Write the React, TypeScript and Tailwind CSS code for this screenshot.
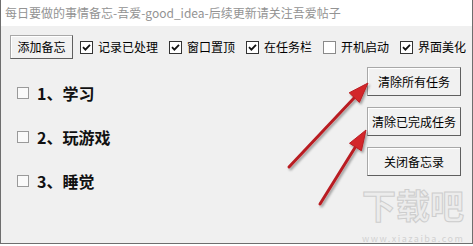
import React from "react";

const font = { fontFamily: '"Noto Sans CJK SC", "Noto Sans", sans-serif' };

const options = [
  { label: "记录已处理", checked: true },
  { label: "窗口置顶", checked: true },
  { label: "在任务栏", checked: true },
  { label: "开机启动", checked: false },
  { label: "界面美化", checked: true },
];

const tasks = ["1、学习", "2、玩游戏", "3、睡觉"];

const actions = ["清除所有任务", "清除已完成任务", "关闭备忘录"];

function Box({ checked, small }: { checked: boolean; small?: boolean }) {
  return (
    <span
      className={
        small
          ? "flex h-[12px] w-[12px] items-center justify-center border border-[#9a9a9a] bg-[#fafafa]"
          : checked
          ? "flex h-[13px] w-[13px] items-center justify-center border border-[#333333] bg-white"
          : "flex h-[13px] w-[13px] items-center justify-center border border-[#8a8a8a] bg-white"
      }
    >
      {checked && (
        <svg width="9" height="9" viewBox="0 0 9 9">
          <path d="M1 4.2 L3.4 6.6 L8 1.8" fill="none" stroke="#111" strokeWidth="1.8" />
        </svg>
      )}
    </span>
  );
}

function WinButton({ children, className }: { children: React.ReactNode; className: string }) {
  return (
    <button
      className={
        "flex items-center justify-center border border-[#a8a8a8] border-b-[#5f5f5f] border-r-[#5f5f5f] bg-[#f1f1f1] text-[12px] text-black shadow-[inset_1px_1px_0_#ffffff] " +
        className
      }
    >
      {children}
    </button>
  );
}

export default function App() {
  return (
    <div className="h-[246px] w-[473px] bg-white" style={font}>
      <div className="relative flex h-[244px] w-[473px] flex-col overflow-hidden border-b border-l border-r border-[#6e6e6e] bg-[#f0f0f0]">
        {/* title bar */}
        <div className="flex h-[26px] shrink-0 items-center bg-white pl-[4px] text-[12px] text-[#939393]">
          每日要做的事情备忘-吾爱-good_idea-后续更新请关注吾爱帖子
        </div>

        {/* toolbar */}
        <div className="mt-[9px] flex items-center pl-[9px]">
          <WinButton className="h-[24px] w-[63px]">添加备忘</WinButton>
          <div className="ml-[7px] flex items-center gap-[11px]">
            {options.map((o) => (
              <label key={o.label} className="flex items-center gap-[5px] text-[12px] text-black">
                <Box checked={o.checked} />
                {o.label}
              </label>
            ))}
          </div>
        </div>

        {/* content */}
        <div className="flex flex-1 justify-between">
          <div className="flex flex-col gap-[23px] pl-[16px] pt-[23px]">
            {tasks.map((t) => (
              <div key={t} className="flex h-[21px] items-center gap-[8px]">
                <Box checked={false} small />
                <span className="text-[16px] font-bold text-[#111]">{t}</span>
              </div>
            ))}
          </div>
          <div className="flex flex-col gap-[11px] pr-[11px] pt-[8px]">
            {actions.map((a) => (
              <WinButton key={a} className="h-[29px] w-[94px]">
                {a}
              </WinButton>
            ))}
          </div>
        </div>

        {/* watermark */}
        <span className="pointer-events-none absolute left-[361px] top-[187px] h-[36px] text-[34px] font-bold leading-[36px] tracking-[0px] text-[#ececec] [-webkit-text-stroke:1px_#cdcdcd]">
          下载吧
        </span>
        <span className="pointer-events-none absolute left-[361px] top-[234px] h-[9px] text-[9px] leading-[9px] tracking-[1.5px] text-[#d2d2d2]">
          www.xiazaiba.com
        </span>

        {/* arrows */}
        <svg className="pointer-events-none absolute left-0 top-0" width="473" height="246">
          <defs>
            <filter id="sh" x="-20%" y="-20%" width="140%" height="140%">
              <feDropShadow dx="1.5" dy="2" stdDeviation="1.2" floodColor="#000" floodOpacity="0.35" />
            </filter>
          </defs>
          <g filter="url(#sh)" fill="#d3262b" stroke="#b91d22">
            <line x1="288" y1="167" x2="354" y2="97" strokeWidth="3" strokeLinecap="round" />
            <polygon points="367,83 358.4,102.4 348.2,92.8" strokeWidth="1" />
            <line x1="319" y1="204" x2="355" y2="146" strokeWidth="3" strokeLinecap="round" />
            <polygon points="365,130 360.4,150.7 348.5,143.3" strokeWidth="1" />
          </g>
        </svg>
      </div>
    </div>
  );
}
